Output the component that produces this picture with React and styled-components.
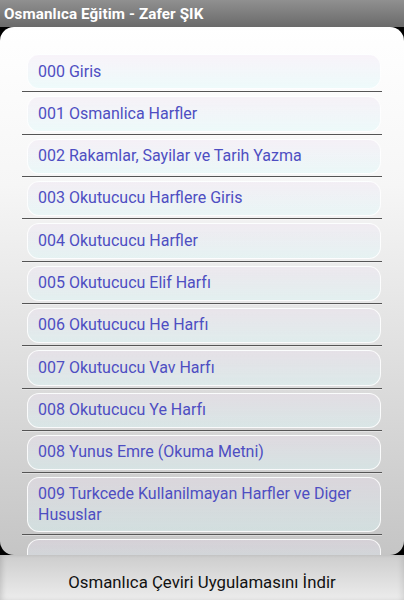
import React from "react";
import styled, { createGlobalStyle } from "styled-components";

const Global = createGlobalStyle`
  html, body { margin: 0; padding: 0; background: #000; }
  body { font-family: Roboto, "Noto Sans", "Liberation Sans", sans-serif; }
  * { box-sizing: border-box; }
`;

const Screen = styled.div`
  width: 404px;
  height: 600px;
  display: flex;
  flex-direction: column;
  background: #000;
  overflow: hidden;
`;

const TitleBar = styled.header`
  height: 27px;
  flex: 0 0 27px;
  display: flex;
  align-items: center;
  padding: 0 4px;
  background: linear-gradient(#909090, #6a6a6a);
  color: #fff;
  font-weight: 700;
  font-size: 15.2px;
  letter-spacing: 0.1px;
`;

const Panel = styled.main`
  flex: 0 0 528px;
  border-radius: 14px;
  overflow: hidden;
  background: linear-gradient(#ffffff 0%, #f6f6f6 30%, #c5c5c5 100%);
`;

const List = styled.ul`
  list-style: none;
  margin: 0;
  padding: 24px 22px 0 22px;
`;

const Row = styled.li`
  display: flex;
  flex-direction: column;
  padding-top: 3px;
`;

const ItemButton = styled.button`
  margin: 0 1px 2px 5px;
  min-height: 35.33px;
  padding: 6px 10px;
  text-align: left;
  border-radius: 12px;
  border: 1.5px solid rgba(255, 255, 255, 0.85);
  background: linear-gradient(rgba(238, 226, 242, 0.38), rgba(222, 250, 250, 0.45));
  color: #4e4ec2;
  font-family: Roboto, "Noto Sans", "Liberation Sans", sans-serif;
  font-size: 16px;
  line-height: 20.33px;
  cursor: pointer;
`;

const Separator = styled.div`
  height: 2px;
  border-top: 1px solid #555;
  border-bottom: 1px solid rgba(255, 255, 255, 0.35);
`;

const BottomBar = styled.button`
  flex: 1 1 auto;
  border: none;
  margin: 0;
  padding: 8px 0 0 0;
  background: linear-gradient(#cdcdcd, #ececec);
  box-shadow: inset 4px 0 6px -3px rgba(0, 0, 0, 0.18), inset -4px 0 6px -3px rgba(0, 0, 0, 0.12);
  color: #111;
  font-family: Roboto, "Noto Sans", "Liberation Sans", sans-serif;
  font-size: 16.8px;
  text-align: center;
  cursor: pointer;
`;

const items = [
  "000 Giris",
  "001 Osmanlica Harfler",
  "002 Rakamlar, Sayilar ve Tarih Yazma",
  "003 Okutucucu Harflere Giris",
  "004 Okutucucu Harfler",
  "005 Okutucucu Elif Harfı",
  "006 Okutucucu He Harfı",
  "007 Okutucucu Vav Harfı",
  "008 Okutucucu Ye Harfı",
  "008 Yunus Emre (Okuma Metni)",
  "009 Turkcede Kullanilmayan Harfler ve Diger Hususlar",
  "",
];

export default function App() {
  return (
    <>
      <Global />
      <Screen>
        <TitleBar>Osmanlıca Eğitim - Zafer ŞIK</TitleBar>
        <Panel>
          <List>
            {items.map((t, i) => (
              <Row key={i}>
                <ItemButton aria-hidden={t ? undefined : true}>{t}</ItemButton>
                <Separator />
              </Row>
            ))}
          </List>
        </Panel>
        <BottomBar>Osmanlıca Çeviri Uygulamasını İndir</BottomBar>
      </Screen>
    </>
  );
}
